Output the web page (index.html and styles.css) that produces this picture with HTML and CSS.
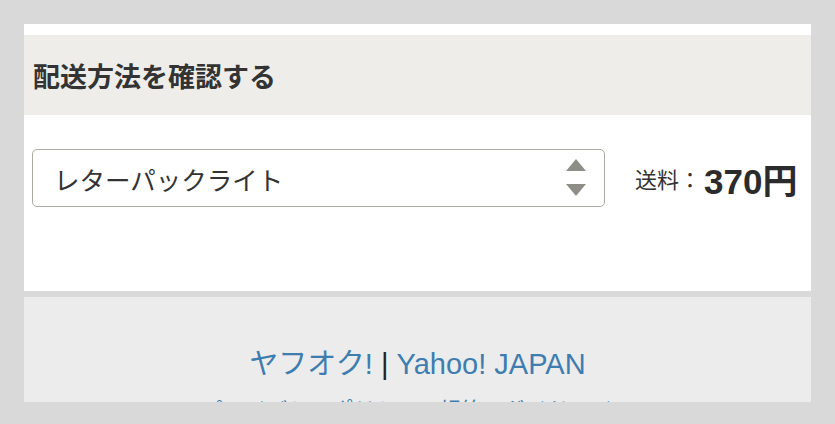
FILE: index.html
```html
<!DOCTYPE html>
<html lang="ja">
<head>
<meta charset="utf-8">
<link rel="stylesheet" href="styles.css">
</head>
<body>
<div class="frame">
  <section class="shipping">
    <h2 class="shipping-title">配送方法を確認する</h2>
    <div class="shipping-body">
      <div class="select">
        <span class="select-value">レターパックライト</span>
        <svg class="select-arrows" width="22" height="40" viewBox="0 0 22 40">
          <polygon points="11,1 21,13 1,13" fill="#8e8e86"/>
          <polygon points="1,26 21,26 11,38" fill="#8e8e86"/>
        </svg>
      </div>
      <div class="price">
        <span class="price-label">送料：</span><span class="price-value">370円</span>
      </div>
    </div>
  </section>
  <footer class="footer">
    <p class="footer-links"><a class="link">ヤフオク!</a> <span class="sep">|</span> <a class="link">Yahoo! JAPAN</a></p>
    <p class="footer-sub"><a class="link">プライバシーポリシー - 規約 - ガイドライン</a></p>
  </footer>
</div>
</body>
</html>
```

FILE: styles.css
```css
html, body {
  margin: 0;
  padding: 0;
}
body {
  background: #d9d9d9;
  padding: 24px 24px 0 24px;
  font-family: "Liberation Sans", "Noto Sans CJK JP", sans-serif;
  color: #333;
}
.frame {
  height: 378px;
  overflow: hidden;
  background: #d9d9d9;
}
.shipping {
  background: #fff;
  padding-top: 11px;
}
.shipping-title {
  margin: 0;
  height: 80px;
  display: flex;
  align-items: center;
  padding-left: 9px;
  background: #eeede9;
  font-family: "Noto Sans CJK JP", sans-serif;
  font-size: 27px;
  font-weight: 700;
  color: #333;
  letter-spacing: 0;
}
.shipping-body {
  display: flex;
  align-items: center;
  padding: 34px 0 84px 8px;
}
.select {
  box-sizing: border-box;
  width: 573px;
  height: 58px;
  border: 1.5px solid #acaba3;
  border-radius: 5px;
  display: flex;
  align-items: center;
  justify-content: space-between;
  padding: 0 17px 0 21px;
}
.select-value {
  font-family: "Noto Sans CJK JP", sans-serif;
  font-size: 25.5px;
  color: #333;
}
.select-arrows {
  display: block;
}
.price {
  margin-left: 30px;
  display: flex;
  align-items: center;
  white-space: nowrap;
}
.price-label {
  font-family: "Noto Sans CJK JP", sans-serif;
  font-size: 22px;
  color: #333;
}
.price-value {
  font-family: "Liberation Sans", "Noto Sans CJK JP", sans-serif;
  font-size: 35px;
  font-weight: 700;
  color: #2b2b2b;
  margin-left: 3px;
}
.footer {
  margin-top: 6px;
  background: #ececec;
  text-align: center;
  padding-top: 48px;
}
.footer-links {
  margin: 0;
  font-size: 29px;
  line-height: 38px;
  color: #333;
}
.link {
  color: #3d7db0;
  text-decoration: none;
}
.sep {
  color: #222;
}
.footer-sub {
  margin: 9px 0 0;
  font-size: 22px;
}
```
